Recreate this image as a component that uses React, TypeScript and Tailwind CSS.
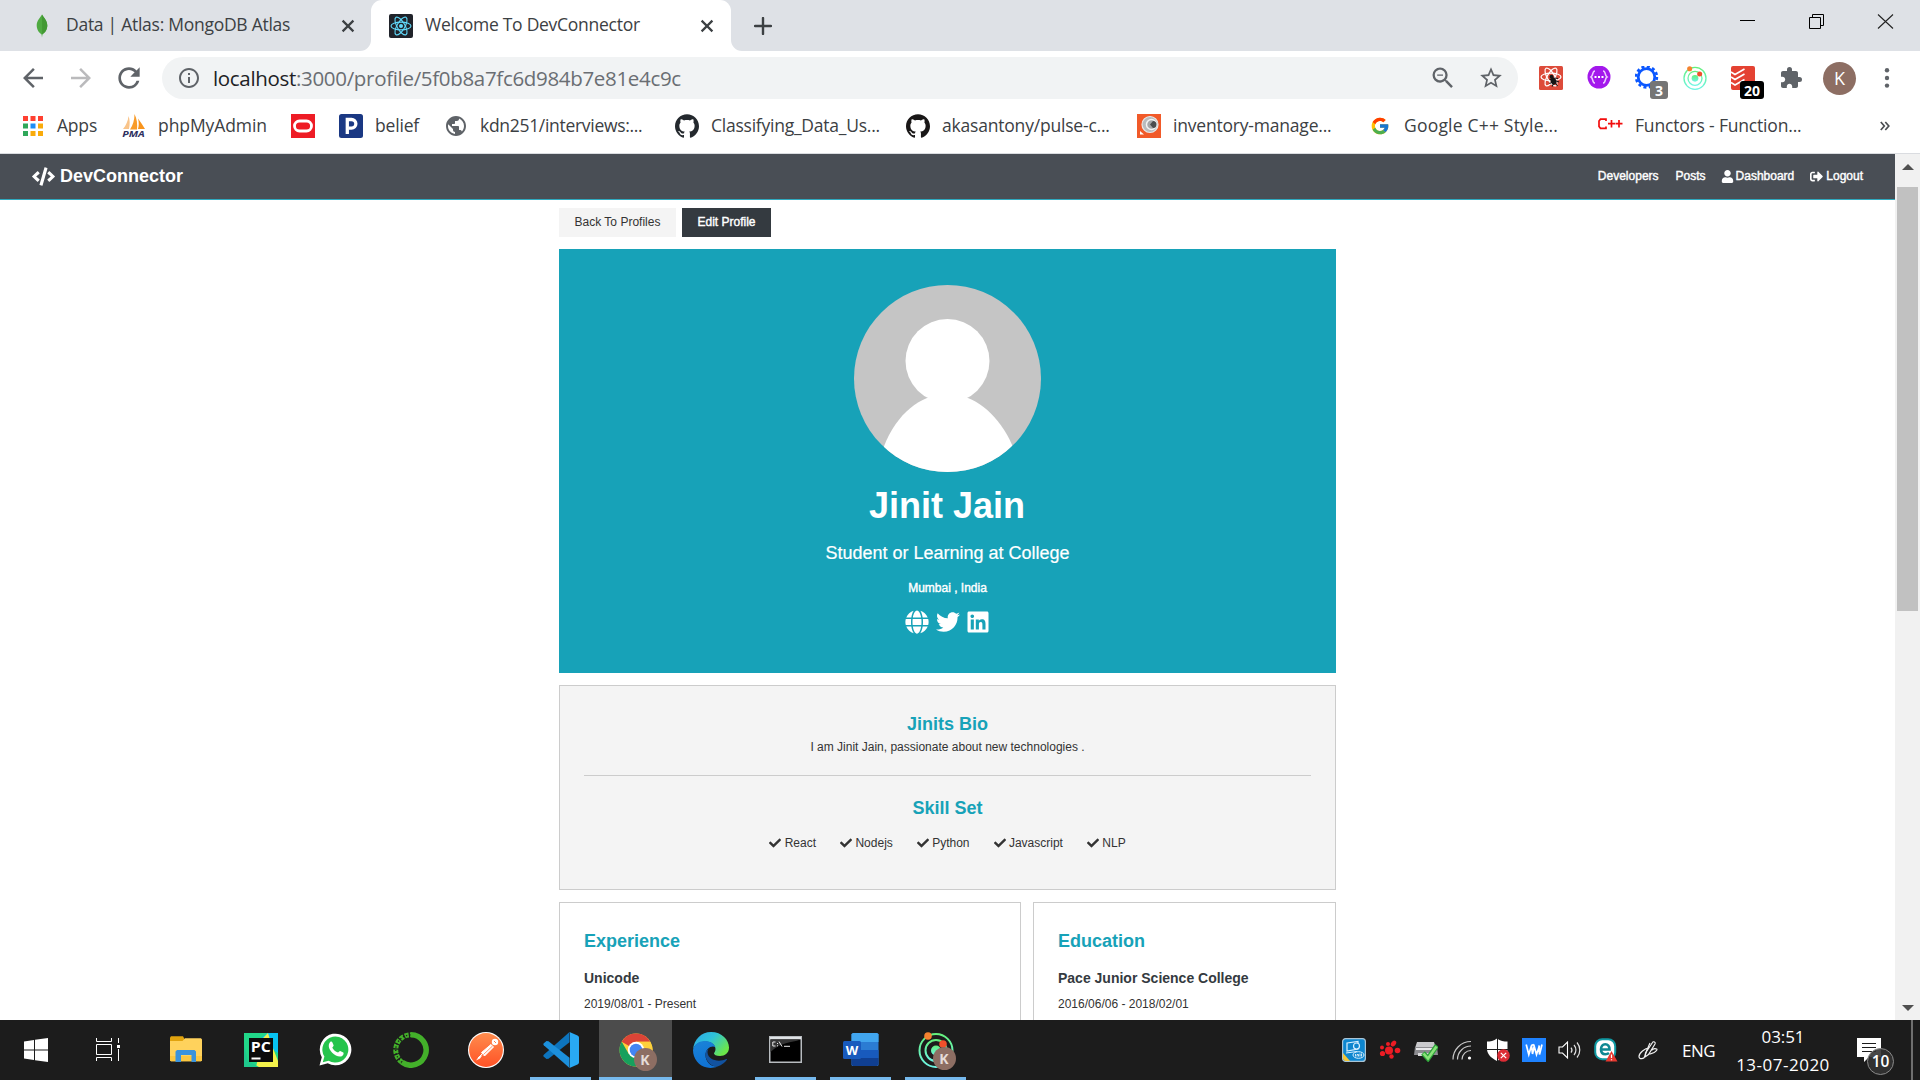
import React from "react";
import {
  FaCode,
  FaUser,
  FaSignOutAlt,
  FaGlobe,
  FaTwitter,
  FaLinkedin,
  FaCheck,
} from "react-icons/fa";
import {
  MdArrowBack,
  MdArrowForward,
  MdRefresh,
  MdInfoOutline,
  MdZoomOut,
  MdStarBorder,
  MdExtension,
  MdPublic,
} from "react-icons/md";
import { SiGithub } from "react-icons/si";
import { FcGoogle } from "react-icons/fc";

/* ---------- small shared drawings ---------- */

const TabClose = () => (
  <svg viewBox="0 0 14 14" className="size-[14px] shrink-0">
    <path d="M1.6 1.6 12.4 12.4M12.4 1.6 1.6 12.4" stroke="#3c4043" strokeWidth="2.2" />
  </svg>
);

const MongoLeaf = () => (
  <svg viewBox="0 0 24 24" className="size-6 shrink-0">
    <path d="M12 0.5C14 4 17.3 6.500 17.300 11.500C17.300 16 14.500 19 12.400 20.500L12 23.500L11.600 20.500C9.500 19 6.700 16 6.700 11.500C6.700 6.500 10 4 12 0.500Z" fill="#4faa41" />
    <path d="M12 .5C14 4 17.300 6.500 17.300 11.500C17.300 16 14.500 19 12.200 20.500Z" fill="#439934" />
  </svg>
);

const ReactMark = () => (
  <svg viewBox="0 0 24 24" className="size-6 shrink-0">
    <rect width="24" height="24" rx="2" fill="#20232a" />
    <g fill="none" stroke="#61dafb" strokeWidth="1.100">
      <ellipse cx="12" cy="12" rx="10" ry="3.900" />
      <ellipse cx="12" cy="12" rx="10" ry="3.900" transform="rotate(60 12 12)" />
      <ellipse cx="12" cy="12" rx="10" ry="3.900" transform="rotate(120 12 12)" />
    </g>
    <circle cx="12" cy="12" r="2" fill="#61dafb" />
  </svg>
);

const RadarMark = ({ className }: { className: string }) => (
  <svg viewBox="0 0 36 36" className={className}>
    <defs>
      <linearGradient id="radar" x1="0" y1="0" x2="0" y2="1">
        <stop offset="0" stopColor="#64f07c" />
        <stop offset="1" stopColor="#6ef5e4" />
      </linearGradient>
    </defs>
    <g fill="none" stroke="url(#radar)" strokeWidth="2">
      <circle cx="18" cy="18.500" r="16.500" />
      <circle cx="18" cy="18.500" r="10.500" />
    </g>
    <circle cx="18" cy="18.500" r="5" fill="url(#radar)" />
    <circle cx="10" cy="4" r="3.800" fill="#f5822f" />
    <circle cx="25" cy="12" r="3.800" fill="#f1502b" />
  </svg>
);

/* ---------- tab strip ---------- */

function TabStrip() {
  return (
    <div className="flex h-[51px] bg-[#dee1e6]">
      <div className="flex w-[371px] items-center pl-[30px]">
        <MongoLeaf />
        <span className="ml-3 w-[275px] pb-[3px] text-[17.5px] tracking-[-0.27px] text-[#3c4043]">
          Data | Atlas: MongoDB Atlas
        </span>
        <TabClose />
      </div>
      <div className="h-[51px] w-[360px] bg-[#dee1e6]">
        <div className="relative flex h-[51px] items-center rounded-t-[11px] bg-white pl-[18px]">
          <svg viewBox="0 0 11 11" className="absolute bottom-0 -left-[11px] size-[11px]">
            <path d="M11 0V11H0A11 11 0 0 0 11 0Z" fill="#fff" />
          </svg>
          <svg viewBox="0 0 11 11" className="absolute -right-[11px] bottom-0 size-[11px]">
            <path d="M0 0V11H11A11 11 0 0 1 0 0Z" fill="#fff" />
          </svg>
          <ReactMark />
          <span className="ml-[12px] w-[275px] pb-[3px] text-[17.5px] tracking-[-0.27px] text-[#3c4043]">
            Welcome To DevConnector
          </span>
          <TabClose />
        </div>
      </div>
      <div className="flex flex-1 items-center pl-[23px]">
        <svg viewBox="0 0 18 18" className="size-[18px]">
          <path d="M9 1V17M1 9H17" stroke="#3c4043" strokeWidth="2.400" strokeLinecap="round" />
        </svg>
      </div>
      <div className="flex gap-[52px] pt-[13px] pr-[26px]">
        <svg viewBox="0 0 17 17" className="size-[17px]">
          <path d="M1 7.500H16" stroke="#000" strokeWidth="1" />
        </svg>
        <svg viewBox="0 0 17 17" className="size-[17px]">
          <path d="M1.500 4.500H12.500V15.500H1.500ZM4.500 4.500V1.500H15.500V12.500H12.500" fill="none" stroke="#000" />
        </svg>
        <svg viewBox="0 0 17 17" className="size-[17px]">
          <path d="M1 1.500 16 15.500M16 1.500 1 15.500" stroke="#222" strokeWidth="1.100" />
        </svg>
      </div>
    </div>
  );
}

/* ---------- toolbar ---------- */

const ReactDevIcon = () => (
  <svg viewBox="0 0 24 24" className="size-6">
    <rect width="24" height="24" rx="1.500" fill="#dd4b3a" />
    <g fill="none" stroke="#fff" strokeWidth="1.200">
      <ellipse cx="12" cy="11" rx="10" ry="3.800" />
      <ellipse cx="12" cy="11" rx="10" ry="3.800" transform="rotate(60 12 11)" />
      <ellipse cx="12" cy="11" rx="10" ry="3.800" transform="rotate(120 12 11)" />
    </g>
    <ellipse cx="14.500" cy="15" rx="2.700" ry="3.700" fill="#151515" transform="rotate(-25 14.500 15)" />
    <circle cx="12.500" cy="10.800" r="2" fill="#151515" />
    <path d="M10.500 13 14 14.500M10.500 17.500 14 16M13 20.500 15 17M15.500 12 19 12.500M16 14.500 20 16M16.500 17 18.500 20" stroke="#151515" strokeWidth="1.100" />
  </svg>
);

const PurpleIcon = () => (
  <svg viewBox="0 0 24 24" className="size-6">
    <circle cx="12" cy="11" r="11.500" fill="#a318ec" />
    <path d="M8 5C5 5 6.500 9.500 4 11C6.500 12.500 5 17 8 17M16 5C19 5 17.500 9.500 20 11C17.500 12.500 19 17 16 17" fill="none" stroke="#eccbfd" strokeWidth="1.500" />
    <path d="M7.500 11H16.500" stroke="#fff" strokeWidth="2" strokeDasharray="2 1.500" />
  </svg>
);

const GearIcon = () => (
  <svg viewBox="0 0 24 24" className="size-6">
    <circle cx="11.500" cy="11" r="8.300" fill="none" stroke="#0b57ff" strokeWidth="2.800" />
    <circle cx="11.500" cy="11" r="10.400" fill="none" stroke="#0b57ff" strokeWidth="2.600" strokeDasharray="3 2.445" />
  </svg>
);

const TodoistIcon = () => (
  <svg viewBox="0 0 24 24" className="size-6">
    <rect width="24" height="24" rx="2" fill="#e44232" />
    <path d="M0 6 4 8.500 13.500 3M0 11 4 13.500 13.500 8M0 16.500 4 19 13.500 13.500" fill="none" stroke="#fff" strokeWidth="1.600" />
  </svg>
);

function Toolbar() {
  return (
    <div className="flex h-[54px] items-center bg-white pl-[18px] text-[#5f6368]">
      <MdArrowBack className="size-[30px]" />
      <MdArrowForward className="ml-[18px] size-[30px] text-[#bababc]" />
      <MdRefresh className="ml-[17px] size-8" />
      <div className="ml-[17px] flex h-[42px] w-[1356px] items-center rounded-full bg-[#f1f3f4] pl-[15px]">
        <MdInfoOutline className="size-6" />
        <span className="ml-3 flex-1 pt-px text-[20.5px] tracking-[-0.32px] text-[#6a6e73]">
          <span className="text-[#202124]">localhost</span>:3000/profile/5f0b8a7fc6d984b7e81e4c9c
        </span>
        <MdZoomOut className="size-7" />
        <MdStarBorder className="mr-[14px] ml-[21px] size-[26px]" />
      </div>
      <div className="ml-[21px] flex items-center gap-6">
        <ReactDevIcon />
        <PurpleIcon />
        <div className="relative">
          <GearIcon />
          <span className="absolute top-[15px] left-[15px] h-[18px] w-[18px] rounded-[3px] bg-[#757575] text-center text-[14px] leading-[19px] font-bold text-white">
            3
          </span>
        </div>
        <RadarMark className="size-6" />
        <div className="relative">
          <TodoistIcon />
          <span className="absolute top-[15px] left-[9px] h-[18px] w-6 rounded-[3px] bg-black text-center text-[14px] leading-[19px] font-bold text-white">
            20
          </span>
        </div>
        <MdExtension className="size-6" />
      </div>
      <div className="ml-5 flex size-[33px] items-center justify-center rounded-full bg-[#8d6e63] text-[18px] text-white">
        K
      </div>
      <svg viewBox="0 0 6 22" className="ml-[28px] h-[22px] w-[6px]">
        <circle cx="3" cy="3.200" r="2.200" fill="#5f6368" />
        <circle cx="3" cy="11" r="2.200" fill="#5f6368" />
        <circle cx="3" cy="18.600" r="2.200" fill="#5f6368" />
      </svg>
    </div>
  );
}

/* ---------- bookmarks ---------- */

const AppsIcon = () => (
  <svg viewBox="0 0 20 20" className="size-5">
    {[
      ["#ff4031", 0, 0], ["#ff4031", 7.500, 0], ["#ff4031", 15, 0],
      ["#2fa85a", 0, 7.500], ["#1e8df5", 7.500, 7.500], ["#f9ab0b", 15, 7.500],
      ["#2fa85a", 0, 15], ["#f9ab0b", 7.500, 15], ["#f9ab0b", 15, 15],
    ].map(([c, x, y], i) => (
      <rect key={i} x={x} y={y} width="5" height="5" fill={c as string} />
    ))}
  </svg>
);

const PmaIcon = () => (
  <svg viewBox="0 0 24 24" className="size-6 overflow-visible">
    <path d="M6.500 2C6 7 4 11.500 1 15H7C8 10 8 6 6.500 2Z" fill="#f9c48a" />
    <path d="M12.500 0C12.500 6 11 11 8 15.500H15C15.500 10 15 5 12.500 0Z" fill="#f89c2a" />
    <path d="M16 4.500C17 8 17 12 16 15H23C21 11.500 18.500 8 16 4.500Z" fill="#f8941d" />
    <text x="0.300" y="23" fontSize="8.800" fontWeight="bold" fontStyle="italic" fontFamily="Open Sans" fill="#2d2f5e" textLength="22.500" lengthAdjust="spacingAndGlyphs">PMA</text>
  </svg>
);

const OracleIcon = () => (
  <svg viewBox="0 0 24 24" className="size-6">
    <rect width="24" height="24" fill="#ee1c25" />
    <rect x="3.500" y="7" width="17" height="10" rx="5" fill="none" stroke="#fff" strokeWidth="2.800" />
  </svg>
);

const PIcon = () => (
  <svg viewBox="0 0 24 24" className="size-6">
    <rect width="24" height="24" rx="2.500" fill="#1a3883" />
    <path d="M8.300 20V5.500H12.500A4.300 4.300 0 0 1 12.500 14.200H10" fill="none" stroke="#fff" strokeWidth="3.300" />
  </svg>
);

const InventoryIcon = () => (
  <svg viewBox="0 0 24 24" className="size-6">
    <rect width="24" height="24" fill="#f15a29" />
    <circle cx="13" cy="10.500" r="8" fill="#b9bbbd" stroke="#e8e8e8" strokeWidth="1.200" />
    <circle cx="14.500" cy="10.500" r="5" fill="#a5a7a9" stroke="#f3f3f3" strokeWidth="1.500" />
    <path d="M16 7A3.500 3.500 0 0 1 16 14L13 10.500Z" fill="#4b4d4f" />
    <path d="M3 17 7 20.500H3Z" fill="#fff" />
  </svg>
);

const CppIcon = () => (
  <svg viewBox="0 0 25 12" className="mb-1 h-3 w-[25px]">
    <path d="M8 3V1.200H2.500L1 3V8.500L2.500 10.300H8V8.500M10 5.700H17M13.500 2V9.500M17.500 5.700H24.500M21 2V9.500" fill="none" stroke="#f20d0d" strokeWidth="1.700" />
  </svg>
);

const bookmarks = [
  { label: "Apps", icon: <AppsIcon />, box: "w-[99px]", text: "ml-[14px] tracking-[-0.2px]" },
  { label: "phpMyAdmin", icon: <PmaIcon />, box: "w-[169px]", text: "ml-[12px] tracking-[-0.08px]" },
  { label: "", icon: <OracleIcon />, box: "w-12", text: "" },
  { label: "belief", icon: <PIcon />, box: "w-[106px]", text: "ml-3 tracking-[-0.18px]" },
  { label: "kdn251/interviews:...", icon: <MdPublic className="-ml-px size-6 text-[#5f6368]" />, box: "w-[230px]", text: "ml-3 tracking-[-0.3px]" },
  { label: "Classifying_Data_Us...", icon: <SiGithub className="size-6 text-[#24292e]" />, box: "w-[231px]", text: "ml-[12px] tracking-[-0.24px]" },
  { label: "akasantony/pulse-c...", icon: <SiGithub className="size-6 text-[#191717]" />, box: "w-[231px]", text: "ml-[12px] tracking-[-0.2px]" },
  { label: "inventory-manage...", icon: <InventoryIcon />, box: "w-[233px]", text: "ml-[12px] tracking-[-0.2px]" },
  { label: "Google C++ Style...", icon: <FcGoogle className="size-5" />, box: "w-[228px]", text: "ml-[14px] tracking-[0.2px]" },
  { label: "Functors - Function...", icon: <CppIcon />, box: "w-[282px]", text: "ml-[12px] tracking-[-0.18px]" },
];

function Bookmarks() {
  return (
    <div className="flex h-[49px] items-center border-b border-[#dadce0] bg-white pb-[6px] pl-[23px]">
      {bookmarks.map((b, i) => (
        <div key={i} className={"flex h-8 shrink-0 items-center " + b.box}>
          {b.icon}
          {b.label && (
            <span className={"pb-px text-[17.5px] whitespace-nowrap text-[#3c4043] " + b.text}>{b.label}</span>
          )}
        </div>
      ))}
      <svg viewBox="0 0 10 10" className="size-[10px]">
        <path d="M.8 1 4.300 5 .8 9M5.300 1 8.800 5 5.300 9" fill="none" stroke="#4a4d51" strokeWidth="1.700" />
      </svg>
    </div>
  );
}

/* ---------- web page ---------- */

function Navbar() {
  return (
    <div className="flex h-[46px] items-center border-b border-[#2faabf] bg-[#494e55] pr-8 pb-[1px] pl-8 text-white">
      <FaCode className="size-[23px]" />
      <span className="ml-[5px] text-[18px] leading-[20px] font-bold">DevConnector</span>
      <div className="ml-auto flex items-center text-[12px] leading-[14px] [-webkit-text-stroke:0.4px_white]">
        <span>Developers</span>
        <span className="ml-[17px]">Posts</span>
        <FaUser className="ml-[15px] size-[13px]" />
        <span className="ml-[2px]">Dashboard</span>
        <FaSignOutAlt className="ml-[16px] size-[13px]" />
        <span className="ml-[3px]">Logout</span>
      </div>
    </div>
  );
}

const Avatar = () => (
  <svg viewBox="0 0 187 187" className="size-[187px]">
    <defs>
      <clipPath id="round">
        <circle cx="93.500" cy="93.500" r="93.500" />
      </clipPath>
    </defs>
    <g clipPath="url(#round)">
      <rect width="187" height="187" fill="#c5c5c5" />
      <circle cx="93.500" cy="76" r="42" fill="#fff" />
      <path d="M24 187C28 150 50 122 73 113H114C137 122 160 150 166 187Z" fill="#fff" />
    </g>
  </svg>
);

const skills = ["React", "Nodejs", "Python", "Javascript", "NLP"];

function Profile() {
  return (
    <div className="mx-auto mt-2 w-[777px] text-[12px] text-[#333]">
      <div className="flex gap-[6px] leading-[14px]">
        <div className="h-[29px] w-[117px] bg-[#f4f4f4] pt-[7px] text-center">Back To Profiles</div>
        <div className="h-[29px] w-[89px] bg-[#343a40] pt-[7px] text-center text-white [-webkit-text-stroke:0.4px_white]">
          Edit Profile
        </div>
      </div>

      <div className="mt-3 flex h-[424px] flex-col items-center bg-[#17a2b8] pt-9 text-white">
        <Avatar />
        <div className="mt-[5px] mr-px text-[36px] leading-[57px] font-bold">Jinit Jain</div>
        <div className="mt-[5px] text-[18px] leading-[29px] [-webkit-text-stroke:0.2px_white]">
          Student or Learning at College
        </div>
        <div className="mt-[10px] leading-5 [-webkit-text-stroke:0.4px_white]">Mumbai , India</div>
        <div className="mt-3 flex items-center gap-[6px]">
          <FaGlobe className="size-6" />
          <FaTwitter className="ml-px size-6" />
          <FaLinkedin className="size-6" />
        </div>
      </div>

      <div className="mt-3 h-[205px] border border-[#ccc] bg-[#f4f4f4] px-6 pt-6 text-center">
        <div className="text-[18px] leading-[28px] font-bold text-[#17a2b8]">Jinits Bio</div>
        <div className="leading-[18px]">I am Jinit Jain, passionate about new technologies .</div>
        <div className="mt-[19px] h-px bg-[#ccc]" />
        <div className="mt-[18px] text-[18px] leading-[28px] font-bold text-[#17a2b8]">Skill Set</div>
        <div className="mt-[10px] flex justify-center gap-6 leading-[22px]">
          {skills.map((s) => (
            <div key={s} className="flex items-center">
              <FaCheck className="mr-[3.4px] size-3" />
              {s}
            </div>
          ))}
        </div>
      </div>

      <div className="mt-3 flex gap-3">
        <div className="h-[200px] w-[462px] border border-[#ccc] px-6 pt-6">
          <div className="text-[18px] leading-[28px] font-bold text-[#17a2b8]">Experience</div>
          <div className="mt-[13px] text-[14px] leading-[20px] font-bold text-[#343a40]">Unicode</div>
          <div className="mt-[7px] leading-[18px]">2019/08/01 - Present</div>
        </div>
        <div className="h-[200px] flex-1 border border-[#ccc] px-6 pt-6">
          <div className="text-[18px] leading-[28px] font-bold text-[#17a2b8]">Education</div>
          <div className="mt-[13px] text-[14px] leading-[20px] font-bold text-[#343a40]">
            Pace Junior Science College
          </div>
          <div className="mt-[7px] leading-[18px]">2016/06/06 - 2018/02/01</div>
        </div>
      </div>
    </div>
  );
}

function Scrollbar() {
  return (
    <div className="flex w-[25px] flex-col items-center justify-between bg-[#f1f1f1] pt-[10px] pb-[9px]">
      <div className="flex flex-col items-center">
        <svg viewBox="0 0 12 6" className="h-[6px] w-3">
          <path d="M0 6 6 0 12 6Z" fill="#505050" />
        </svg>
        <div className="mt-[17px] h-[424px] w-[21px] bg-[#c1c1c1]" />
      </div>
      <svg viewBox="0 0 12 6" className="h-[6px] w-3">
        <path d="M0 0 6 6 12 0Z" fill="#505050" />
      </svg>
    </div>
  );
}

/* ---------- taskbar ---------- */

const KBadge = () => (
  <span className="absolute top-[15px] left-[15px] flex size-[23px] items-center justify-center rounded-full bg-[#8d6e63] text-[14px] font-bold text-[#e6dcd8]">
    K
  </span>
);

const WinLogo = () => (
  <svg viewBox="0 0 24 24" className="size-6">
    <path d="M0 3.400 10 2V11.500H0ZM11 1.800 24 0V11.500H11ZM0 12.500H10V22L0 20.600ZM11 12.500H24V24L11 22.200Z" fill="#fff" />
  </svg>
);

const TaskView = () => (
  <svg viewBox="0 0 24 24" className="size-6">
    <path d="M.5 0V3.500H15.500V0M.5 6.500H15.500V16.500H.5ZM.5 23V19.500H15.500V23M22.500 0V5M22.500 11V23" fill="none" stroke="#fff" />
    <rect x="21" y="7" width="3" height="3" fill="#fff" />
  </svg>
);

const Folder = () => (
  <svg viewBox="0 0 32 27" className="h-[27px] w-8">
    <path d="M0 1.500 1 .3H13L14.500 3V6H0Z" fill="#e1a30e" />
    <path d="M0 5H12.500L15 2.300H31L32 3.500V24.500L31 25.300H1L0 24.500Z" fill="#ffd25c" />
    <path d="M0 20H32V24.500L31 25.300H1L0 24.500Z" fill="#fbc741" />
    <path d="M5.500 26V15.500L7 14H24.500L26 15.500V26H21.500V19H11V26Z" fill="#3a93dd" />
  </svg>
);

const PyCharm = () => (
  <svg viewBox="0 0 34 34" className="size-[34px]">
    <rect width="34" height="34" fill="#21d789" />
    <path d="M17 5 24 0 34 0V20L22 12Z" fill="#07c3f2" />
    <path d="M19 5 24 0 27 10 34 28V34H12Z" fill="#f3f14b" />
    <path d="M0 12V34H15L4 28Z" fill="#1fc98d" />
    <rect x="5" y="5" width="24" height="24" fill="#0b0b0b" />
    <rect x="7.500" y="24.500" width="9" height="2" fill="#fff" />
    <text x="6.800" y="18.800" fontSize="13.500" fontWeight="bold" fontFamily="Open Sans" fill="#fff" textLength="20" lengthAdjust="spacingAndGlyphs">PC</text>
  </svg>
);

const WhatsApp = () => (
  <svg viewBox="0 0 33 33" className="size-[33px]">
    <path d="M.5 32.500 2.800 24.200A15.800 15.800 0 1 1 8.800 30.200Z" fill="#fff" />
    <path d="M3.800 29.200 5.400 23.600A13 13 0 1 1 9.600 27.700Z" fill="#25c44c" />
    <path d="M11.200 9C12 8.200 13 8.500 13.300 9.200L14.600 12.200C14.800 13 13.500 14.200 13.300 14.700C14.500 17 16.500 18.700 19 19.600C19.600 19.400 20.500 17.800 21.200 18L24.300 19.500C24.900 19.900 24.700 22.300 22.800 23.200C20 24.500 16 22.500 13.200 19.700C10.400 16.900 8.200 12.500 11.200 9Z" fill="#fff" />
  </svg>
);

const Anaconda = () => (
  <svg viewBox="0 0 36 36" className="size-9">
    <path d="M18 2.800A15.200 15.200 0 1 1 9 30.300" fill="none" stroke="#43b02a" strokeWidth="5.500" />
    <path d="M9 30.300A15.200 15.200 0 0 1 18 2.800" fill="none" stroke="#43b02a" strokeWidth="5" strokeDasharray="4 1.300" />
    <path d="M9 30.300A15.200 15.200 0 0 1 18 2.800" fill="none" stroke="#1c1c1c" strokeWidth="1.300" strokeDasharray="1.300 2" />
  </svg>
);

const Postman = () => (
  <svg viewBox="0 0 36 36" className="size-9">
    <defs>
      <linearGradient id="pm" x1="0" y1="0" x2="0" y2="1">
        <stop offset="0" stopColor="#ff8c4d" />
        <stop offset="1" stopColor="#ff5226" />
      </linearGradient>
    </defs>
    <circle cx="18" cy="18" r="18" fill="#fff" />
    <circle cx="18" cy="18" r="16.900" fill="url(#pm)" />
    <path d="M8 28.500 10.500 25 14.500 23 12 26.500Z" fill="#fff" />
    <path d="M13.500 20.500 23 12.500 25.500 15 16.500 24ZM10 26 16 20" fill="#fff" stroke="#fff" strokeWidth="1" />
    <path d="M15.500 22.500 24.500 14" stroke="#ff7a45" strokeWidth=".8" />
    <circle cx="27" cy="10" r="3.200" fill="#fff" />
    <path d="M26 9 28 11" stroke="#ff7a45" strokeWidth="1" />
  </svg>
);

const VsCode = () => (
  <svg viewBox="0 0 36 36" className="size-9">
    <path d="M26.500 0 26.500 10.200 5.500 26.800 3.500 27 .8 24.800C.2 24.200 .2 23.400 .8 22.800Z" fill="#0d74bd" />
    <path d="M26.500 36V25.800L5.500 9.200 3.500 9 .8 11.200C.2 11.800 .2 12.600 .8 13.200Z" fill="#1c90dc" />
    <path d="M26.500 0 34.500 3.500C35.500 4 36 4.800 36 5.800V30.200C36 31.200 35.500 32 34.500 32.500L26.500 36C27 35.500 27 35 27 34V2C27 1 27 .5 26.500 0Z" fill="#29a9f3" />
  </svg>
);

const Chrome = () => (
  <svg viewBox="0 0 34 34" className="size-[34px]">
    <circle cx="17" cy="17" r="16.500" fill="#fdd03b" />
    <path d="M17 17 2.700 8.750A16.500 16.500 0 0 1 31.300 8.750H17Z" fill="#db4437" />
    <path d="M2.700 8.750A16.500 16.500 0 0 0 17 33.500L24.200 21.100 17 17 9.800 21.100Z" fill="#17a05d" />
    <path d="M31.300 8.750H17L24.200 12.900 24.200 21.100 17 33.500A16.500 16.500 0 0 0 31.300 8.750Z" fill="#fdd03b" />
    <circle cx="17" cy="17" r="8.200" fill="#fff" />
    <circle cx="17" cy="17" r="6.300" fill="#4285f4" />
  </svg>
);

const Edge = () => (
  <svg viewBox="0 0 36 36" className="size-9">
    <defs>
      <linearGradient id="ed1" x1="0" y1="0" x2="1" y2=".6">
        <stop offset="0" stopColor="#2aa7ea" />
        <stop offset=".5" stopColor="#2fc3d8" />
        <stop offset="1" stopColor="#6be64a" />
      </linearGradient>
      <linearGradient id="ed2" x1="0" y1="0" x2=".3" y2="1">
        <stop offset="0" stopColor="#1b84d8" />
        <stop offset="1" stopColor="#0f72d4" />
      </linearGradient>
    </defs>
    <path d="M0 18C1 7 8.500 0 18 0C29 0 36 8 36 15.500C36 21 32 24 27 24C23 24 21 22.500 21 21.500C21 20.500 22.500 20 22.500 17C22.500 13 18 9.500 12.500 9.500C6 9.500 1 13 0 18Z" fill="url(#ed1)" />
    <path d="M0 18C1 12 6.500 9 12 9C18.500 9 22 13 22.300 15C19 13 12.500 16 12.500 23C12.500 30 18 35 24.500 34.500C21 36 17 36.300 14 35.500C6 34 0 27 0 18Z" fill="url(#ed2)" />
    <path d="M12.800 20C11 27 17 35 24.500 34.500C29 33 32 30.500 34 27.500C34.300 27 33.800 26.700 33.300 27C25 31 15 27.500 14.500 20.500C14.500 19 15 18 15.500 17C14 18 13 19 12.800 20Z" fill="#12529f" />
  </svg>
);

const Cmd = () => (
  <svg viewBox="0 0 33 27" className="h-[27px] w-[33px]">
    <rect width="33" height="27" fill="#b8bcc0" />
    <rect x="1" y="1" width="31" height="2" fill="#dfe3e6" />
    <rect x="1.500" y="3.500" width="30" height="22" fill="#000" />
    <path d="M1.500 3.500H31.500C22 7 12 6 1.500 16Z" fill="#343434" />
    <path d="M6.500 6H3.800V10H6.500M8.500 7V8M8.500 9.300V10.300M10 5.500 13 10.500M15 10.300H21" stroke="#e8e8e8" strokeWidth="1" fill="none" />
  </svg>
);

const Word = () => (
  <svg viewBox="0 0 36 34" className="h-[34px] w-9">
    <rect x="8.500" y="0" width="27" height="33" rx="1.500" fill="#2b7cd3" />
    <path d="M8.500 9V1.500L10 0H34L35.500 1.500V9Z" fill="#41a5ee" />
    <rect x="8.500" y="17" width="27" height="8" fill="#185abd" />
    <path d="M8.500 25H35.500V31.500L34 33H10L8.500 31.500Z" fill="#103f91" />
    <rect x="0" y="8" width="18" height="18" rx="1.500" fill="#185abd" />
    <text x="2.800" y="21.800" fontSize="12.500" fontWeight="bold" fontFamily="Open Sans" fill="#fff" textLength="12.500" lengthAdjust="spacingAndGlyphs">W</text>
  </svg>
);

const pinned = [
  { icon: <Folder />, bar: false, active: false },
  { icon: <PyCharm />, bar: false, active: false },
  { icon: <WhatsApp />, bar: false, active: false },
  { icon: <Anaconda />, bar: false, active: false },
  { icon: <Postman />, bar: false, active: false },
  { icon: <VsCode />, bar: true, active: false },
  { icon: <span className="relative"><Chrome /><KBadge /></span>, bar: true, active: true },
  { icon: <Edge />, bar: false, active: false },
  { icon: <Cmd />, bar: true, active: false },
  { icon: <Word />, bar: true, active: false },
  { icon: <span className="relative"><RadarMark className="size-9" /><KBadge /></span>, bar: true, active: false },
];

const IntelTray = () => (
  <svg viewBox="0 0 24 24" className="size-6">
    <rect x=".6" y=".6" width="22.800" height="22.800" rx="3" fill="#0d86cf" stroke="#a9c4d6" strokeWidth="1.200" />
    <path d="M1 15 8 23H3L1 21Z" fill="#f3c636" />
    <path d="M5 5 16 3.500V11L5 13ZM4 15 15 13.500" fill="none" stroke="#d8f0ff" strokeWidth="1.200" />
    <circle cx="14.500" cy="8" r="3" fill="#0d86cf" stroke="#d8f0ff" strokeWidth="1.200" />
    <ellipse cx="16.500" cy="17" rx="5.500" ry="3.300" fill="none" stroke="#d8f0ff" strokeWidth="1" />
    <path d="M13.500 16V18.500M15 18.500V16.500H16.500V18.500M18 15.500V18.500M19.500 15.500V18.500" fill="none" stroke="#fff" strokeWidth=".8" />
  </svg>
);

const RedTray = () => (
  <svg viewBox="0 0 22 22" className="size-[22px]">
    <g fill="#ed1c24">
      <circle cx="10" cy="11.500" r="4" />
      <circle cx="3" cy="8.500" r="2" />
      <circle cx="3.500" cy="14.500" r="2.600" />
      <circle cx="9" cy="5" r="2" />
      <ellipse cx="14.500" cy="4.500" rx="3.200" ry="2.300" transform="rotate(-50 14.500 4.500)" />
      <circle cx="18.500" cy="11.500" r="2.800" />
      <circle cx="12.500" cy="17.500" r="2.200" />
    </g>
  </svg>
);

const PrinterTray = () => (
  <svg viewBox="0 0 24 24" className="size-6">
    <path d="M3 4H20L22 10H1Z" fill="#c9c9cc" />
    <path d="M1 9H23L24 17H0Z" fill="#8c8c90" />
    <path d="M2 10H21V12H2Z" fill="#e8e8ea" />
    <path d="M4 15H18V18H4Z" fill="#d8d8da" />
    <path d="M9 15 14 20.500 23 7.500" fill="none" stroke="#2ea43a" strokeWidth="5" />
    <path d="M9.500 15.500 14 20.500 22.500 8.500" fill="none" stroke="#8be37a" strokeWidth="2.600" />
  </svg>
);

const WifiTray = () => (
  <svg viewBox="0 0 20 20" className="size-5">
    <g fill="none" stroke="#c9c9c9" strokeWidth="1.200">
      <path d="M1 19.500A18 18 0 0 1 19 1.500" />
      <path d="M5.500 19.500A13.500 13.500 0 0 1 19 6" />
      <path d="M10 19.500A9 9 0 0 1 19 10.500" />
    </g>
    <circle cx="17.500" cy="18" r="1.600" fill="#fff" />
  </svg>
);

const ShieldTray = () => (
  <svg viewBox="0 0 24 24" className="size-6">
    <path d="M11 .5C8 3 4 3.500 1 3.500V11C1 16.500 6 20.500 11 23C16 20.500 21.500 16.500 21.500 11V3.500C18 3.500 14 3 11 .5Z" fill="#fff" />
    <path d="M11.500 0V23M0 11.500H22" stroke="#1c1c1c" />
    <circle cx="17.500" cy="17.500" r="6.300" fill="#dc2c35" />
    <path d="M14.800 14.800 20.200 20.200M20.200 14.800 14.800 20.200" stroke="#fff" strokeWidth="1.200" />
  </svg>
);

const WTray = () => (
  <svg viewBox="0 0 24 24" className="size-6">
    <rect width="24" height="24" fill="#1e82ff" />
    <path d="M4.200 6.500 6.800 16.500 9.500 7.500M9.200 7.500 11.700 6.500M11.700 6.500 14.500 16.500 17.500 7.500M9.500 7.500 10.500 16 12 9M17 7.500 17.500 16.500 20 6.500" fill="none" stroke="#fff" strokeWidth="1.700" />
  </svg>
);

const SpeakerTray = () => (
  <svg viewBox="0 0 24 20" className="h-5 w-6">
    <path d="M1 7H4.500L9.500 2V18L4.500 13H1Z" fill="none" stroke="#fff" strokeWidth="1.100" />
    <path d="M13 7.500A4 4 0 0 1 13 12.500M16 5A7.500 7.500 0 0 1 16 15M19 2.500A11.500 11.500 0 0 1 19 17.500" fill="none" stroke="#e0e0e0" strokeWidth="1.200" />
  </svg>
);

const ETray = () => (
  <svg viewBox="0 0 24 24" className="size-6">
    <rect x="1.200" y="1.200" width="20" height="20" rx="7" fill="#fff" stroke="#0f98a2" strokeWidth="2" />
    <path d="M7 11.500H15.500C15.500 8 13.800 6.300 11.300 6.300C8.500 6.300 7 8.500 7 11.500C7 14.500 8.800 16.200 11.500 16.200C13 16.200 14 15.800 15 15" fill="none" stroke="#0f8893" strokeWidth="2.600" />
    <path d="M17.500 13 23.500 23.500H11.500Z" fill="#e8382f" />
    <path d="M17.500 16.500V20M17.500 21.200V22.300" stroke="#fff" strokeWidth="1.200" />
  </svg>
);

const PenTray = () => (
  <svg viewBox="0 0 20 20" className="size-5">
    <g fill="none" stroke="#f0f0f0" strokeWidth="1.200">
      <path d="M7 17 7.500 13 14.500 2.500C15.500 .8 18 2.300 17 4L10.500 14.500 7 17" />
      <path d="M11 8C7 8 1 13 1 16.500C1 19.500 6 19.500 7 16C8 12 10.500 6 12 3" />
      <path d="M13.500 10.500C15 8.500 17 8 19.500 9.500M11 14C13.500 13.500 16 14 19 10" />
    </g>
  </svg>
);

function Taskbar() {
  return (
    <div className="flex h-[60px] bg-[#1c1c1c] text-[17px] text-white">
      <div className="flex w-[72px] items-center justify-center"><WinLogo /></div>
      <div className="mr-[4px] flex w-[72px] items-center justify-center"><TaskView /></div>
      {pinned.map((p, i) => (
        <div key={i} className="flex w-[75px] justify-center">
          <div
            className={
              "flex h-[60px] items-center justify-center border-b-[3px] pt-[2px] " +
              (p.active ? "w-[73px] bg-[#4c4c4c] " : "w-[61px] ") +
              (p.bar ? "border-[#76b9ed]" : "border-transparent")
            }
          >
            {p.icon}
          </div>
        </div>
      ))}
      <div className="ml-[369px] flex items-center gap-3">
        <IntelTray />
        <div className="flex w-6 justify-center"><RedTray /></div>
        <PrinterTray />
        <div className="flex w-6 justify-center"><WifiTray /></div>
        <ShieldTray />
        <WTray />
        <div className="flex w-6 justify-center"><SpeakerTray /></div>
        <ETray />
      </div>
      <div className="ml-5 flex items-center"><PenTray /></div>
      <div className="ml-6 flex w-[36px] items-center pt-px text-[17px] tracking-[-0.5px]">ENG</div>
      <div className="ml-[14px] flex w-[102px] flex-col items-center pt-[3px] leading-[28px]">
        <span className="tracking-[-0.1px]">03:51</span>
        <span className="tracking-[0.5px]">13-07-2020</span>
      </div>
      <div className="relative ml-[23px] flex w-[54px] pt-[18px]">
        <svg viewBox="0 0 24 26" className="h-[26px] w-6">
          <path d="M0 0H24V19H12L7 24V19H0Z" fill="#fff" />
          <path d="M5 5.500H19M5 9.500H19M5 13.500H19" stroke="#1c1c1c" />
        </svg>
        <span className="absolute top-[28px] left-[10px] flex size-[27px] items-center justify-center rounded-full border border-[#8a8a8a] bg-[#333]/90 text-[15.5px] font-semibold">
          10
        </span>
      </div>
      <div className="h-[60px] w-[2px] bg-[#6f6f6f]" />
    </div>
  );
}

export default function App() {
  return (
    <div className="flex h-[1080px] w-[1920px] flex-col overflow-hidden bg-white font-['Open_Sans',sans-serif]">
      <TabStrip />
      <Toolbar />
      <Bookmarks />
      <div className="flex min-h-0 flex-1">
        <div className="flex-1 overflow-hidden font-['Liberation_Sans',Arial,sans-serif]">
          <Navbar />
          <Profile />
        </div>
        <Scrollbar />
      </div>
      <Taskbar />
    </div>
  );
}
